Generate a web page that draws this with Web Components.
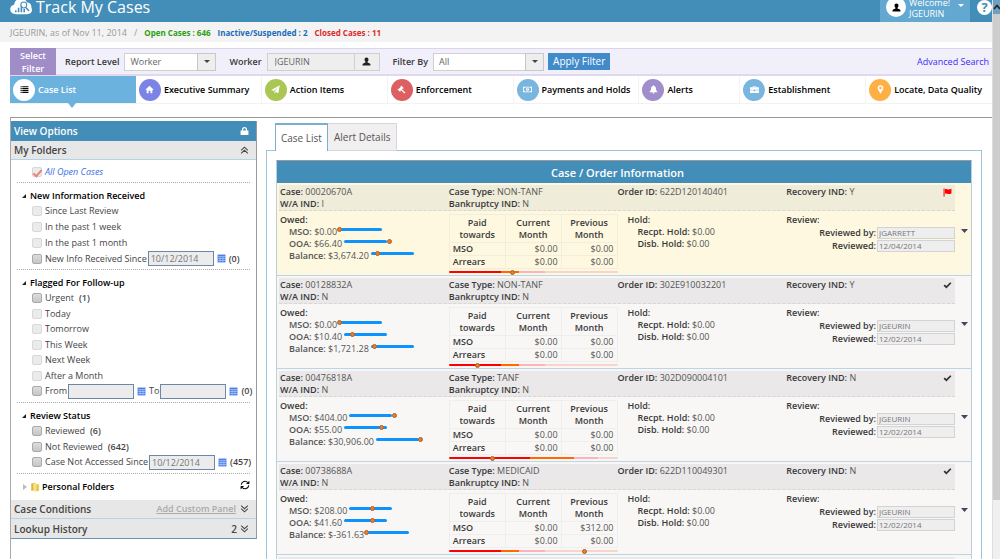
<!DOCTYPE html>
<html lang="en">
<head>
<meta charset="utf-8">
<title>Track My Cases</title>
<style>
html, body { margin: 0; height: 100%; overflow: hidden; background: #fff; }
body { font-family: "Open Sans", "Noto Sans", sans-serif; font-size: 9px; line-height: 12px; color: #393939; }
</style>
</head>
<body>
<track-app></track-app>
<script>
const define = (name, html) => {
  const template = document.createElement('template');
  customElements.define(name, class extends HTMLElement {
    connectedCallback() {
      if (this.shadowRoot) return;
      template.innerHTML = typeof html === 'function' ? html(this) : html;
      this.attachShadow({ mode: 'open' }).append(template.content.cloneNode(true));
    }
  });
};

const glyphs = {
  list: '<path d="M1 2h2v2H1zM4 2h11v2H4zM1 5.400h2v2H1zM4 5.400h11v2H4zM1 8.800h2v2H1zM4 8.800h11v2H4zM1 12.200h2v2H1zM4 12.200h11v2H4z"/>',
  home: '<path d="M8 1.500 15 8.200l-1 1L13 8.300V14.500H9.700V10H6.300v4.500H3V8.300L2 9.200l-1-1L8 1.500z"/>',
  plane: '<path d="M15.500.5 13 14.500 8.500 12.500 6.300 15.500V11.500L13 4 4.800 10.700.5 9z"/>',
  gavel: '<path d="M7.500 1 12 5.500 10.900 6.600 10.200 6.300 8.900 7.600l6.100 6-1.600 1.700-6.100-6.100-1.300 1.200.4.800-1.100 1L.900 7.800 2 6.700l.8.300 4-4-.4-.900z"/>',
  money: '<path fill-rule="evenodd" d="M0 3h16v10H0zM3 4.500A2 2 0 0 1 1.500 6v4A2 2 0 0 1 3 11.500h10A2 2 0 0 1 14.500 10V6A2 2 0 0 1 13 4.500zM8 5a2.500 3 0 1 1 0 6 2.500 3 0 1 1 0-6zm-.7 1.300v.9h.4v2h-.5v.7h1.900v-.7h-.5V6.300z"/>',
  bell: '<path d="M8 .5c.7 0 1 .4 1 1.100 2.300.5 3.500 2.200 3.500 4.600 0 3.300.8 4.600 2.500 5.800v.8H1V12c1.700-1.200 2.500-2.500 2.500-5.800C3.500 3.800 4.700 2.100 7 1.600 7 .9 7.300.5 8 .5zM6 13.500h4a2 2 0 0 1-4 0z"/>',
  brief: '<path fill-rule="evenodd" d="M5 4V2h6v2h5v4.500H0V4zM6.300 4h3.400v-.8H6.300zM0 9.500h6.500V11h3V9.500H16V14H0z"/>',
  pin: '<path fill-rule="evenodd" d="M8 .5a5 5 0 0 1 5 5c0 2.500-2 4.500-5 10-3-5.500-5-7.500-5-10a5 5 0 0 1 5-5zm0 2.700a2.300 2.300 0 1 0 0 4.600 2.300 2.300 0 0 0 0-4.600z"/>',
  user: '<path d="M8 1c2.200 0 3.500 1.500 3.500 3.800 0 1.600-.7 3-1.700 3.800v1.200c1 .8 4.700 1.200 5.200 3.200V15H1v-2c.5-2 4.200-2.400 5.200-3.200V8.600C5.200 7.800 4.500 6.400 4.500 4.800 4.500 2.500 5.800 1 8 1z"/>',
  lock: '<path fill-rule="evenodd" d="M3.500 7V5.500a4.500 4.500 0 0 1 9 0V7H15v8H1V7zm2.200 0h4.600V5.500a2.300 2.300 0 0 0-4.600 0z"/>',
  up: '<path fill="none" stroke="currentColor" stroke-width="1.800" d="M2 8.500 8 3l6 5.500M2 14l6-5.500 6 5.500"/>',
  down: '<path fill="none" stroke="currentColor" stroke-width="1.800" d="M2 2l6 5.500L14 2M2 7.500 8 13l6-5.500"/>',
  refresh: '<path fill="none" stroke="currentColor" stroke-width="1.700" d="M2 7.500A6 6 0 0 1 12.500 4M14 8.500A6 6 0 0 1 3.500 12"/><path d="M15 1v5.500H9.500zM1 15V9.500h5.500z"/>',
  calendar: '<path d="M1 1h14v14H1z"/><path stroke="#c9d8fa" fill="none" d="M1 4.500h14M1 8h14M1 11.500h14M5.500 5v10M10.500 5v10"/>',
  folder: '<path fill="#d9b93c" d="M2 2.500 8 1v12l-6 1z"/><path fill="#f6e48a" d="M5 3l4-2 1 2 4 .5V14l-8 1.500z"/><path fill="#e8cb55" d="M10 3.500l4.500.5V14L10 15z"/>',
  flag: '<path d="M1 1h1.800v14H1zM3.500 2c2.500-1.200 4 .8 6 .8 1.600 0 3-.8 5.500-1.300V9.800c-2.500.8-4 1.200-5.500 1C7.300 10.500 6 9 3.500 10z"/>',
  check: '<path d="M1 8.500 3.200 6.300 6 9 12.800 2 15 4.200 6 13.500z"/>',
  chart: '<path fill="#fff" d="M9 18C4 18 1 15.500 1 11.800 1 8.500 3.300 6.500 6 6.200 6.500 1.500 10 -2 14.500-2c3.700 0 6.300 2 7.300 5.200C26 3.500 28 7 27.500 9.800 29.500 14 27.500 18 22 18z"/><g fill="#438eb9"><path d="M7 13h2v2.500H7zM10.500 10h2v5.500h-2zM14 7.500h2v8h-2zM17.500 11.500h2v4h-2z"/></g><circle cx="18" cy="6.500" r="3.700" fill="none" stroke="#438eb9" stroke-width="1.300"/><path stroke="#438eb9" stroke-width="1.800" d="m20.500 9.500 4 4.500"/>'
};
define('ui-icon', el => `<style>:host{display:inline-block;width:9px;height:9px;flex:none}svg{display:block;width:100%;height:100%;fill:currentColor}</style>
<svg viewBox="${el.getAttribute('box') || '0 0 16 16'}" aria-hidden="true">${glyphs[el.getAttribute('name')]}</svg>`);

define('app-header', `<style>
:host{display:flex;flex:none;align-items:center;justify-content:space-between;height:22px;background:#438eb9;color:#fff;overflow:hidden}
h1{display:flex;align-items:center;gap:3px;margin:0 0 8px 9px;font-size:16px;line-height:22px;font-weight:400}
h1 ui-icon{width:24px;height:16px}
.right{display:flex;align-items:center;height:22px}
.user{display:flex;align-items:center;gap:3px;box-sizing:border-box;width:90px;height:22px;padding:0 6px;border:0;background:#62a8d1;color:#fff;font:inherit;line-height:11px;text-align:left}
.avatar{display:grid;place-items:center;width:20px;height:20px;border-radius:50%;background:#fff;color:#000;margin-bottom:8px}
.name{margin-bottom:6px}
.caret{margin:0 0 12px auto;border:3px solid transparent;border-top-color:#fff;border-bottom:0}
.help{width:15px;height:15px;padding:0;margin:0 0 8px 7px;border:0;border-radius:50%;background:#fff;color:#438eb9;font:700 13px/15px "Open Sans",sans-serif}
</style>
<h1><ui-icon name="chart" box="0 -1 29 20"></ui-icon>Track My Cases</h1>
<div class="right"><button class="user"><span class="avatar"><ui-icon name="user"></ui-icon></span><span class="name">Welcome!<br>JGEURIN</span><span class="caret"></span></button><button class="help">?</button></div>`);

define('status-bar', `<style>
:host{display:flex;flex:none;align-items:center;height:20px;margin-bottom:6px;padding:2px 10px 0;box-sizing:border-box;background:#f3f3f3;color:#999;white-space:pre}
b{font-size:8px;font-weight:700;margin-right:7px}.g{color:#2ca00f}.b{color:#1b6cb8}.r{color:#dc2b2b}i{font-style:normal;margin:0 7px}
</style><span>JGEURIN, as of Nov 11, 2014</span><i>/</i><b class="g">Open Cases : 646</b><b class="b">Inactive/Suspended : 2</b><b class="r">Closed Cases : 11</b>`);

define('filter-bar', `<style>
:host{display:flex;flex:none;align-items:center;height:28px;margin-left:10px;box-sizing:border-box;background:#f1effa;border-top:1px solid #dcd3ee;border-bottom:2px solid #ded9ec}
.tag{align-self:stretch;display:grid;place-items:center;width:46px;background:#a08dc8;color:#fff;font-weight:600;font-size:9px;line-height:13px;text-align:center;margin:-1px 9px -1px 0}
label{font-weight:600;font-size:9px;margin-right:5px}
select,input{box-sizing:border-box;height:18px;border:1px solid #d0d0d0;border-radius:0;background:#fff;color:#666;font:9px/16px "Open Sans",sans-serif;padding:0 5px}
input{width:88px;background:#eee;padding-left:7px}
.pick{display:grid;margin-right:13px}
.pick>*{grid-area:1/1}
select{appearance:none;width:100%}
.pick span{justify-self:end;display:grid;place-items:center;box-sizing:border-box;width:19px;height:18px;border:1px solid #c8c8c8;background:#eee;pointer-events:none}
.pick span::after{content:"";border:3px solid transparent;border-top-color:#444;border-bottom:0}
.level{width:92px}.by{width:111px;margin-right:4px}
.who{display:grid;place-items:center;width:25px;height:18px;box-sizing:border-box;margin-right:13px;padding:0;border:1px solid #d0d0d0;border-left:0;background:#eee;color:#222}
.apply{height:17px;padding:0 5px;border:0;background:#428bca;color:#fff;font:10px/17px "Open Sans",sans-serif}
a{margin:0 3px 0 auto;color:#3a2df5;text-decoration:none}
</style>
<div class="tag">Select<br>Filter</div>
<label for="level">Report Level</label><div class="pick level"><select id="level"><option>Worker</option></select><span></span></div>
<label for="worker">Worker</label><input id="worker" value="JGEURIN"><button class="who" aria-label="Choose worker"><ui-icon name="user"></ui-icon></button>
<label for="by">Filter By</label><div class="pick by"><select id="by"><option>All</option></select><span></span></div>
<button class="apply">Apply Filter</button><a href="#">Advanced Search</a>`);

define('nav-item', el => `<style>
:host{display:flex;flex:0 1 126px;min-width:0;position:relative;box-sizing:border-box;border-right:1px solid #f3f3f3}
:host([short]){flex-basis:101px}:host([last]){border:0}
:host([active]){background:#6cb2df;border-color:#6cb2df}
a{display:flex;align-items:center;gap:3px;padding-left:3px;color:#000;text-decoration:none;font-weight:600;font-size:9px;white-space:nowrap}
:host([active]) a{color:#fff}
.dot{display:grid;place-items:center;width:22px;height:22px;border-radius:50%;background:${el.getAttribute('color')};color:#fff}
:host([active]) .dot{color:#000}
:host([active])::after{content:"";position:absolute;left:58px;top:100%;border:4px solid transparent;border-top:5px solid #6cb2df;border-bottom:0}
</style><a href="#"><span class="dot"><ui-icon name="${el.getAttribute('icon')}"></ui-icon></span><slot></slot></a>`);

define('main-nav', `<style>:host{display:flex;flex:none;height:28px;margin-left:10px;box-sizing:border-box;border-bottom:1px solid #f2f2f2;margin-bottom:13px}</style>
<nav-item active icon="list" color="#fff">Case List</nav-item><nav-item icon="home" color="#7b83e6">Executive Summary</nav-item><nav-item icon="plane" color="#a9c752">Action Items</nav-item><nav-item icon="gavel" color="#dc5f62">Enforcement</nav-item><nav-item icon="money" color="#78b6e0">Payments and Holds</nav-item><nav-item short icon="bell" color="#a08dcc">Alerts</nav-item><nav-item icon="brief" color="#78b6e0">Establishment</nav-item><nav-item last icon="pin" color="#ffb044">Locate, Data Quality</nav-item>`);

let serial = 0;
define('check-line', el => {
  const a = n => el.getAttribute(n), id = 'c' + (++serial);
  const date = (v, label) => `<input type="text" aria-label="${label}" value="${v}"><ui-icon name="calendar"></ui-icon>`;
  return `<style>
:host{display:flex;align-items:center;height:15px;padding-left:10px;white-space:nowrap;color:#444}
input[type=checkbox]{flex:none;appearance:none;box-sizing:border-box;width:10px;height:10px;margin:0 3px 0 0;border:1px solid #d8d8d8;border-radius:2px;background:#ebebeb}
:host([strong]) input[type=checkbox]{border-color:#aaa;background:linear-gradient(#dcdcdc,#c6c6c6)}
input[type=text]{flex:none;box-sizing:border-box;width:66px;height:15px;margin:0 3px 0 1px;padding:0 2px;border:1px solid #6f87a5;background:#ececec;color:#777;font:9px/13px "Open Sans",sans-serif}
ui-icon{color:#4a7ee8;margin-right:3px}b{font-weight:600;margin-left:5px}ui-icon+b{margin-left:0}
:host([all]){color:#3b6fe8;font-style:italic;height:20px;padding:2px 0 0 21px}
:host([all]) input{display:grid;place-items:center}
:host([all]) input::after{content:"";width:7px;height:3px;border:solid #e8827a;border-width:0 0 2px 2px;transform:rotate(-48deg)}
</style><input type="checkbox" id="${id}" ${el.hasAttribute('all') ? 'checked' : ''}><label for="${id}"><slot></slot></label>
${a('date') !== null ? date(a('date'), 'Date') : ''}${a('to') !== null ? 'To' + date('', 'End date') : ''}${a('count') ? `<b>(${a('count')})</b>` : ''}`;
});

define('check-group', el => `<style>
:host{display:flex;flex-direction:column;justify-content:space-between;box-sizing:border-box;margin:0 6px;padding:5px 0 3px 5px;border-top:1px dotted #aaa;min-height:${el.getAttribute('size')}px}
h3{display:flex;align-items:center;gap:4px;margin:0;font-size:9px;line-height:15px;font-weight:600;color:#000}
h3::before{content:"";border-left:4px solid transparent;border-bottom:4px solid #222}
</style><h3>${el.getAttribute('heading')}</h3><slot></slot>`);

define('side-panel', `<style>
:host{display:block;box-sizing:border-box;margin-top:3px;border-right:1px solid #999;border-bottom:1px solid #6594b5}
h2{display:flex;align-items:center;box-sizing:border-box;margin:0;padding:0 7px 0 3px;height:19px;font-size:10px;line-height:18px;font-weight:600;background:#e7e7e7;color:#444;border-bottom:1px solid #b3d3ea}
h2 ui-icon{margin-left:auto;height:10px}
.top{height:20px;background:#438eb9;color:#fff;border:0}
.end{border:0}
h2 a{margin-left:auto;margin-right:4px;color:#aaa;font-size:9px}h2 a+ui-icon{margin:0}
h2 span{margin-left:auto;margin-right:3px}h2 span+ui-icon{margin:0}
.folders{display:flex;align-items:center;height:26px;margin:0 6px;padding:0 0 0 6px;border-top:1px dotted #aaa;color:#000;font-weight:600}
.folders::before{content:"";border:3px solid transparent;border-left:4px solid #bbb;border-right:0;margin-right:3px}
.folders ui-icon{margin-right:2px;width:10px;height:10px}.folders ui-icon:last-child{margin:0 0 4px auto}
</style>
<h2 class="top">View Options<ui-icon name="lock"></ui-icon></h2>
<h2>My Folders<ui-icon name="up"></ui-icon></h2>
<check-line all>All Open Cases</check-line>
<check-group size="87" heading="New Information Received"><check-line>Since Last Review</check-line><check-line>In the past 1 week</check-line><check-line>In the past 1 month</check-line><check-line strong date="10/12/2014" count="0">New Info Received Since</check-line></check-group>
<check-group size="133" heading="Flagged For Follow-up"><check-line strong count="1">Urgent</check-line><check-line>Today</check-line><check-line>Tomorrow</check-line><check-line>This Week</check-line><check-line>Next Week</check-line><check-line>After a Month</check-line><check-line strong date="" to count="0">From</check-line></check-group>
<check-group size="71" heading="Review Status"><check-line strong count="6">Reviewed</check-line><check-line strong count="642">Not Reviewed</check-line><check-line strong date="10/12/2014" count="457">Case Not Accessed Since</check-line></check-group>
<div class="folders"><ui-icon name="folder"></ui-icon>Personal Folders<ui-icon name="refresh"></ui-icon></div>
<h2>Case Conditions<a href="#">Add Custom Panel</a><ui-icon name="down"></ui-icon></h2>
<h2 class="end">Lookup History<span>2</span><ui-icon name="down"></ui-icon></h2>`);

const cases = [
  ['00020670A','I','NON-TANF','N','622D120140401','Y','$0.00','$66.40','$3,674.20',[1,46,7],63,'JGARRETT','12/04/2014','$0.00'],
  ['00128832A','N','NON-TANF','N','302E910032201','Y','$0.00','$10.40','$1,721.28',[1,9,4],28,'JGEURIN','12/02/2014','$0.00'],
  ['00476818A','N','TANF','N','302D090004101','N','$404.00','$55.00','$30,906.00',[46,38,45],43,'JGEURIN','12/02/2014','$0.00'],
  ['00738688A','N','MEDICAID','N','622D110049301','N','$208.00','$41.60','$-361.63',[24,29,1],135,'JGEURIN','12/02/2014','$312.00']
];
define('owed-line', el => `<style>
:host{display:flex;align-items:center;gap:2px;height:12px;padding-left:9px}
b{font-weight:600}
.bar{position:relative;width:43px;height:3px;border-radius:2px;background:#0d93fb;margin-bottom:5px}
.bar::after{content:"";position:absolute;top:-1px;left:calc(${el.getAttribute('at')}px - 3px);width:3px;height:3px;border:1px solid #a8622f;border-radius:50%;background:#f27b22}
</style><span><b><slot></slot></b> ${el.getAttribute('amount')}</span><span class="bar"></span>`);

define('case-row', el => {
  const i = +el.getAttribute('index'), c = cases[i];
  const seg = i === 2 ? [81,125,149] : [52,70,96];
  return `<style>
:host{display:grid;grid-template-columns:1fr 14px;box-sizing:border-box;height:93px;padding:2px 2px 0 2px;border-bottom:1px solid #b9d5e8;background:${i ? '#f8f7f6' : '#fdf8df'};color:#555}
b{font-weight:600;color:#393939}
.strip,.body{display:grid;grid-template-columns:repeat(4,1fr)}
.strip{position:relative;height:24px;padding:1px 0 0 1px;background:${i ? '#eae8e9' : '#efecd9'};border-bottom:1px dashed #d9d6d0;margin-bottom:3px}
.strip ui-icon{position:absolute;right:3px;top:3px;color:${i ? '#333' : '#f00'}}
.body{padding-left:1px}
table{border-collapse:collapse;width:100%;table-layout:fixed}
th,td{border:1px solid ${i ? '#efeeee' : '#f1eedb'};padding:0 3px;text-align:right;line-height:12px}
thead th{text-align:center;padding:2px 8px 1px}th{font-weight:600;color:#393939}tbody th{text-align:left}
.gauge{position:relative;height:2px;margin-top:2px;border-radius:2px;background:linear-gradient(90deg,#f00 ${seg[0]}px,#ff6a00 0 ${seg[1]}px,#fdb4b8 0 ${seg[2]}px,#fad3cb 0)}
.gauge::after{content:"";position:absolute;top:-1px;left:${c[10]-2}px;width:3px;height:3px;border:1px solid #a8622f;border-radius:50%;background:#f27b22}
.hold{padding-left:10px}.hold div{padding-left:10px}
.review label{display:flex;justify-content:flex-end;align-items:center;height:13px;gap:1px}
input{box-sizing:border-box;width:78px;height:12px;padding:0 1px;border:1px solid #d3d3d6;background:#eee;color:#777;font:8px/10px "Open Sans",sans-serif}
.menu{align-self:start;justify-self:end;margin:44px 1px 0 0;width:7px;height:4px;padding:0;border:0;background:#4b4363;clip-path:polygon(0 0,100% 0,50% 100%)}
</style>
<div><div class="strip"><div><b>Case:</b> ${c[0]}<br><b>W/A IND:</b> ${c[1]}</div><div><b>Case Type:</b> ${c[2]}<br><b>Bankruptcy IND:</b> ${c[3]}</div><div><b>Order ID:</b> ${c[4]}</div><div><b>Recovery IND:</b> ${c[5]}</div><ui-icon name="${i ? 'check' : 'flag'}"></ui-icon></div>
<div class="body"><div><b>Owed:</b>${['MSO:','OOA:','Balance:'].map((n, k) => `<owed-line amount="${c[6+k]}" at="${c[9][k]}">${n}</owed-line>`).join('')}</div>
<div><table><thead><tr><th>Paid towards</th><th>Current Month</th><th>Previous Month</th></tr></thead><tbody><tr><th>MSO</th><td>$0.00</td><td>${c[13]}</td></tr><tr><th>Arrears</th><td>$0.00</td><td>$0.00</td></tr></tbody></table><div class="gauge"></div></div>
<div class="hold"><b>Hold:</b><div><b>Recpt. Hold:</b> $0.00</div><div><b>Disb. Hold:</b> $0.00</div></div>
<div class="review"><b>Review:</b><label><b>Reviewed by:</b><input value="${c[11]}"></label><label><b>Reviewed:</b><input value="${c[12]}"></label></div></div></div>
<button class="menu" aria-label="Case menu"></button>`;
});

define('case-board', `<style>
:host{display:block;padding:5px 0 0;margin-right:10px;min-width:0}
.tabs{display:flex;padding-left:9px;margin-bottom:-1px;position:relative}
button{box-sizing:border-box;height:28px;padding:0 6px;border:1px solid #d6d6e2;border-left:0;background:#f2eff0;color:#555;font:10px/24px "Open Sans",sans-serif;white-space:nowrap}
.on{padding:0 5px;background:#fff;border:1px solid #7ab0ce;border-width:2px 1px 0}
.panel{border:1px solid #9cc5dc;padding:9px 9px 0}
.list{border:1px solid #b9cfdc;border-top-color:#999}
h2{margin:0;height:22px;padding-right:13px;background:#438eb9;color:#fff;font-size:11px;line-height:23px;font-weight:600;text-align:center}
.next{height:93px;border:solid #f8f7f6;border-width:2px 16px 0 2px;background:#eae8e9}
</style><div class="tabs"><button class="on">Case List</button><button>Alert Details</button></div>
<div class="panel"><div class="list"><h2>Case / Order Information</h2>${cases.map((c, i) => `<case-row index="${i}"></case-row>`).join('')}<div class="next"></div></div></div>`);

define('scroll-rail', `<style>
:host{display:flex;flex-direction:column;background:#f0f0f0;border-left:1px solid #ddd;box-sizing:border-box}
.up{display:grid;place-items:center;height:14px;background:#6d9fc0}
.thumb{flex:0 0 87%;background:#cdcdcd}
svg{width:8px;height:6px}
</style><div class="up"><svg viewBox="0 0 8 6"><path d="M1 5l3-3.500L7 5" fill="none" stroke="#222" stroke-width="1.600"/></svg></div><div class="thumb"></div>`);

define('track-app', `<style>
:host{display:grid;grid-template-columns:minmax(0,1fr) 8px;height:100vh;overflow:hidden}
main{display:flex;flex-direction:column;min-height:0;overflow:hidden}
.work{flex:1;min-height:0;display:grid;grid-template-columns:246px minmax(0,1fr);column-gap:9px;margin-left:10px;border-left:1px solid #aaa;border-top:1px solid #999;align-items:start}
</style><main><app-header></app-header><status-bar></status-bar><filter-bar></filter-bar><main-nav></main-nav>
<div class="work"><side-panel></side-panel><case-board></case-board></div></main><scroll-rail></scroll-rail>`);
</script>
</body>
</html>
